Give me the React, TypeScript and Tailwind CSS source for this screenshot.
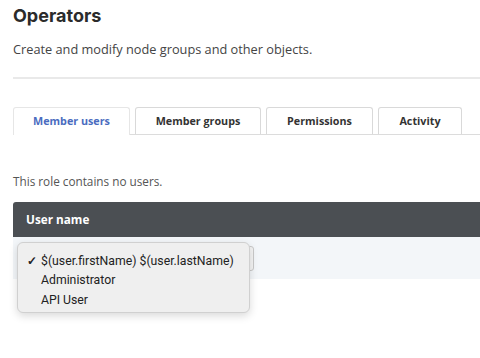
import React from "react";

const tabs = ["Member users", "Member groups", "Permissions", "Activity"];
const tabWidths = ["w-[117px]", "w-[126px]", "w-[107px]", "w-[84px]"];

const users = ["$(user.firstName) $(user.lastName)", "Administrator", "API User"];

export default function App() {
  return (
    <div className="w-[480px] h-[358px] bg-white overflow-hidden pl-[13px] pt-[4px] font-['Open_Sans',sans-serif]">
      <h1 className="text-[18px] leading-[24px] font-bold text-[#2b2b2b] font-['Inter',sans-serif]">
        Operators
      </h1>
      <p className="mt-[12px] text-[12.75px] leading-[18px] text-[#444]">
        Create and modify node groups and other objects.
      </p>
      <div className="mt-[19px] h-[2px] bg-[#e9e9e9]" />

      {/* tabs */}
      <div className="mt-[28px] flex items-end gap-[5px] border-b border-[#dcdcdc]">
        {tabs.map((t, i) => (
          <div
            key={t}
            className={`${tabWidths[i]} flex items-center justify-center text-[10.75px] font-bold rounded-t-[3px] border border-b-0 ${
              i === 0
                ? "bg-white -mb-px h-[28px] border-[#e6e6e6] text-[#4a6cc0]"
                : "h-[27px] border-[#d9d9d9] text-[#333]"
            }`}
          >
            {t}
          </div>
        ))}
      </div>

      <p className="mt-[38px] text-[11.75px] leading-[16px] text-[#555]">This role contains no users.</p>

      {/* table */}
      <div className="mt-[13px]">
        <div className="h-[35px] bg-[#4b4f53] rounded-tl-[3px] flex items-center pl-[13px] text-[11.75px] font-bold text-white">
          User name
        </div>
        <div className="relative h-[42px] bg-[#f3f6f9]">
          <div className="absolute left-[10px] top-[9px] w-[231px] h-[25px] rounded-[3px] border border-[#c9c9c9] bg-[#f4f4f4]" />
          <div className="absolute left-[4px] top-[5px] w-[233px] h-[71px] rounded-[6px] border border-[#d0d0d0] bg-[#efefef] shadow-[0_3px_8px_rgba(0,0,0,0.15)] pt-[8px] font-['Roboto',sans-serif] text-[12.25px] text-[#222]">
            {users.map((u, i) => (
              <div key={u} className="flex items-center h-[19.5px]">
                <span className="w-[23px] pl-[9px] text-[12px] font-bold">{i === 0 ? "✓" : ""}</span>
                <span>{u}</span>
              </div>
            ))}
          </div>
        </div>
      </div>
    </div>
  );
}
